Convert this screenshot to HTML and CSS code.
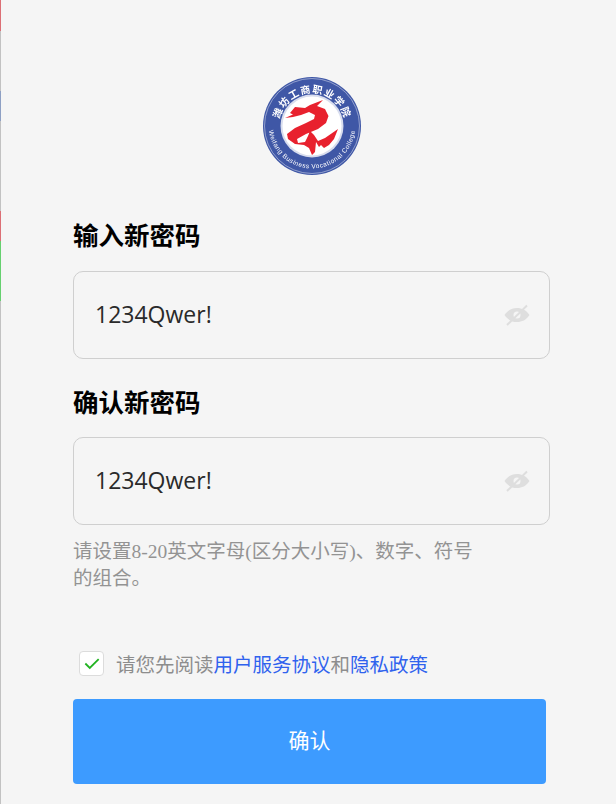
FILE: index.html
```html
<!DOCTYPE html>
<html lang="zh">
<head>
<meta charset="utf-8">
<title>输入新密码</title>
<link rel="stylesheet" href="styles.css">
</head>
<body>
<div class="page">
  <div class="strip" aria-hidden="true">
    <i class="seg red s31"></i><i class="seg grey s60"></i><i class="seg blue s30"></i><i class="seg grey s90"></i><i class="seg red s30"></i><i class="seg green s60"></i><i class="seg grey fill"></i>
  </div>
  <main class="main">
    <div class="logo-row">
      <svg class="logo" width="100" height="100" viewBox="0 0 100 100">
        <defs>
          <path id="arcTop" d="M17 50A33 33 0 0 1 83 50"/>
          <path id="arcBottom" d="M6.500 49A43.500 43.500 0 0 0 93.500 49"/>
        </defs>
        <circle cx="50" cy="50" r="49" fill="#3f57a6"/>
        <circle cx="50" cy="50" r="47.500" fill="none" stroke="#c9d0e8" stroke-width=".6"/>
        <circle cx="50" cy="50" r="31.500" fill="#d8ddee"/>
        <circle cx="50" cy="50" r="29.500" fill="#fff"/>
        <text class="logo-cn"><textPath href="#arcTop" startOffset="50%" text-anchor="middle">潍坊工商职业学院</textPath></text>
        <text class="logo-en"><textPath href="#arcBottom" startOffset="50%" text-anchor="middle">Weifang Business Vocational College</textPath></text>
        <path fill="#e8212e" d="M23 42L31 38.500 28 37 33 31 43 32 48 29 61 24 55 30 63 33 66.500 40 64 47 56 53 44 58 35 63 36 67 43 66 46 60 48 55 52 59 56 65 63 62 76 53 72 63 67 69 62 72 59 69 57 71 54 66 53 76 50 79 47 72 42 69 33 68 26 63 25 58 33 52 44 47 52 43 53 39 47 36 39 39 31 41z"/>
      </svg>
    </div>

    <h2 class="title">输入新密码</h2>
    <div class="field">
      <span class="value">1234Qwer!</span>
      <svg class="eye" width="26" height="24" viewBox="0 0 26 24">
        <path class="eye-shape" fill-rule="evenodd" d="M.5 12C4 7 8 5 13 5s9 2 12.500 7c-3.500 5-7.500 7-12.500 7S4 17 .5 12zM13 8.500a3.500 3.500 0 1 0 0 7 3.500 3.500 0 0 0 0-7z"/>
        <path class="eye-slash" d="M3 22L23 2.500"/>
      </svg>
    </div>

    <h2 class="title title-second">确认新密码</h2>
    <div class="field">
      <span class="value">1234Qwer!</span>
      <svg class="eye" width="26" height="24" viewBox="0 0 26 24">
        <path class="eye-shape" fill-rule="evenodd" d="M.5 12C4 7 8 5 13 5s9 2 12.500 7c-3.500 5-7.500 7-12.500 7S4 17 .5 12zM13 8.500a3.500 3.500 0 1 0 0 7 3.500 3.500 0 0 0 0-7z"/>
        <path class="eye-slash" d="M3 22L23 2.500"/>
      </svg>
    </div>

    <p class="hint">请设置8-20英文字母(区分大小写)、数字、符号的组合。</p>

    <div class="agree">
      <span class="check">
        <svg width="16" height="13" viewBox="0 0 18 14"><path d="M1.500 7l5 5L16.500 2" fill="none" stroke="#22b322" stroke-width="2"/></svg>
      </span>
      <span class="agree-text">请您先阅读<a class="link">用户服务协议</a>和<a class="link">隐私政策</a></span>
    </div>

    <button class="submit" type="button">确认</button>
  </main>
</div>
</body>
</html>
```

FILE: styles.css
```css
* { box-sizing: border-box; }
html, body { margin: 0; height: 100%; }
body {
  background: #f5f5f5;
  overflow: hidden;
  font-family: "Liberation Serif", "Noto Sans CJK SC", serif;
}
.page { display: flex; height: 804px; }
.strip { width: 1px; flex: none; display: flex; flex-direction: column; }
.seg { display: block; }
.red { background: #dc6f75; }
.blue { background: #8ea0c4; }
.green { background: #66d06f; }
.grey { background: #c2c2c2; }
.s30 { height: 30px; }
.s31 { height: 31px; }
.s60 { height: 60px; }
.s90 { height: 90px; }
.fill { flex: 1; }
.main { flex: 1; padding: 76px 66px 0 72px; }
.logo-row { display: flex; justify-content: center; padding-left: 1px; }
.logo { display: block; filter: blur(.3px); }
.logo-cn { font: 700 10px "Noto Sans CJK SC", sans-serif; fill: #fff; letter-spacing: 1.200px; }
.logo-en { font: 400 6.500px "Liberation Sans", sans-serif; fill: #fff; letter-spacing: .5px; }
.title {
  margin: 40px 0 19px;
  font: 700 25.500px/36px "Noto Sans CJK SC", sans-serif;
  color: #000;
}
.title-second { margin-top: 24px; margin-bottom: 18.500px; }
.field {
  height: 87.500px;
  width: 477px;
  display: flex;
  align-items: center;
  justify-content: space-between;
  padding: 0 19px 0 21px;
  border: 1px solid #cfcfcf;
  border-radius: 10px;
}
.value { font: 23px/32px "Open Sans", sans-serif; color: #2a2a2a; margin-top: -1px; }
.eye { margin-top: 1px; }
.eye-shape { fill: #dedede; }
.eye-slash { stroke: #dedede; stroke-width: 2; fill: none; }
.hint {
  margin: 13px 0 0;
  width: 405px;
  font-size: 19.500px;
  line-height: 27px;
  color: #939393;
}
.agree { display: flex; align-items: center; margin: 56px 0 0 6px; height: 32px; }
.check {
  width: 25px;
  height: 25px;
  display: flex;
  align-items: center;
  justify-content: center;
  background: #fff;
  border: 1px solid #dcdcdc;
  border-radius: 4px;
}
.agree-text { margin-left: 12px; font: 400 19.500px/32px "Noto Sans CJK SC", sans-serif; color: #8d8d8d; }
.link { color: #2f62ee; }
.submit {
  display: block;
  width: 473px;
  height: 85px;
  margin-top: 19px;
  padding-bottom: 5px;
  border: 0;
  border-radius: 4px;
  background: #3d9bff;
  color: #fff;
  font: 21px "Noto Sans CJK SC", sans-serif;
}
```
